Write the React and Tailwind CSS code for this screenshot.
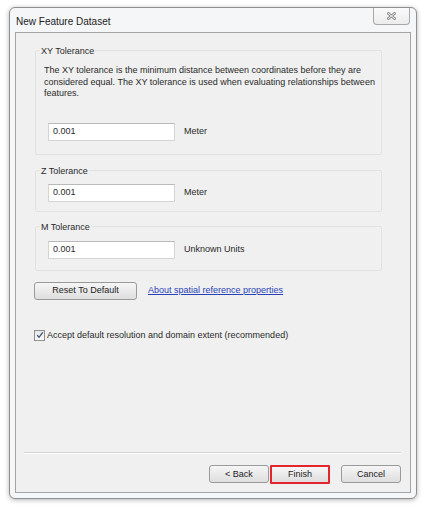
export default function App() {
  const font = { fontFamily: '"Liberation Sans", Arial, sans-serif' }

  const btn =
    "h-[18px] w-[60px] rounded-[3px] border border-[#9a9a9a] bg-gradient-to-b from-[#f6f6f6] to-[#dedede] text-[9px] text-[#222] leading-none flex items-center justify-center"

  return (
    <div className="min-h-[510px] w-[426px] bg-white pt-[7px] pl-[9px]" style={font}>
      {/* Window */}
      <div className="w-[408px] h-[492px] rounded-[6px] border border-[#8f8f8f] bg-[#f5f6f8] shadow-[0_1px_5px_rgba(0,0,0,0.3)] flex flex-col">
        {/* Title bar */}
        <div className="h-[24px] flex items-start justify-between">
          <span className="pl-[6px] pt-[8px] text-[10px] leading-[11px] text-[#1c1c1c]">New Feature Dataset</span>
          <div className="mr-[6px] w-[37px] h-[17px] rounded-b-[4px] border border-t-0 border-[#a8a8a8] bg-gradient-to-b from-[#fafafa] to-[#ececec] flex items-center justify-center">
            <svg width="9" height="8" viewBox="0 0 9 8">
              <path d="M1.5 1.5 L7.5 6.5 M7.5 1.5 L1.5 6.5" stroke="#8a8a8a" strokeWidth="2.6" strokeLinecap="square" />
              <path d="M1.5 1.5 L7.5 6.5 M7.5 1.5 L1.5 6.5" stroke="#f4f4f4" strokeWidth="1" strokeLinecap="square" />
            </svg>
          </div>
        </div>

        {/* Client area */}
        <div className="mx-[5px] mb-[5px] flex-1 border border-[#a4a4a4] bg-[#f0f0f0] flex flex-col text-[9px] text-[#2a2a2a]">
          {/* XY Tolerance */}
          <div className="ml-[19px] mt-[17px] w-[347px] border border-[#e2e2e2] rounded-[2px] pb-[13px]">
            <div className="-mt-[5px] ml-[4px] w-fit px-[1px] bg-[#f0f0f0] leading-[11px]">XY Tolerance</div>
            <p className="mt-[8px] pl-[8px] w-[343px] leading-[11.5px]">
              The XY tolerance is the minimum distance between coordinates before they are considered equal. The XY
              tolerance is used when evaluating relationships between features.
            </p>
            <div className="mt-[23px] ml-[12px] flex items-center gap-[9px]">
              <div className="w-[127px] h-[18px] bg-white border border-[#d4d4d4] border-t-[#b9b9b9] pl-[4px] flex items-center">0.001</div>
              <span>Meter</span>
            </div>
          </div>

          {/* Z Tolerance */}
          <div className="ml-[19px] mt-[15px] w-[347px] border border-[#e2e2e2] rounded-[2px] pb-[9px]">
            <div className="-mt-[5px] ml-[4px] w-fit px-[1px] bg-[#f0f0f0] leading-[11px]">Z Tolerance</div>
            <div className="mt-[7px] ml-[12px] flex items-center gap-[9px]">
              <div className="w-[127px] h-[18px] bg-white border border-[#d4d4d4] border-t-[#b9b9b9] pl-[4px] flex items-center">0.001</div>
              <span>Meter</span>
            </div>
          </div>

          {/* M Tolerance */}
          <div className="ml-[19px] mt-[14px] w-[347px] border border-[#e2e2e2] rounded-[2px] pb-[11px]">
            <div className="-mt-[5px] ml-[4px] w-fit px-[1px] bg-[#f0f0f0] leading-[11px]">M Tolerance</div>
            <div className="mt-[8px] ml-[12px] flex items-center gap-[9px]">
              <div className="w-[127px] h-[18px] bg-white border border-[#d4d4d4] border-t-[#b9b9b9] pl-[4px] flex items-center">0.001</div>
              <span>Unknown Units</span>
            </div>
          </div>

          {/* Reset + link */}
          <div className="ml-[18px] mt-[11px] flex items-center gap-[11px]">
            <button className="h-[18px] w-[103px] rounded-[3px] border border-[#9a9a9a] bg-gradient-to-b from-[#f6f6f6] to-[#dedede] text-[9px] text-[#222] leading-none">
              Reset To Default
            </button>
            <a className="text-[#2942b8] underline leading-none">About spatial reference properties</a>
          </div>

          {/* Checkbox */}
          <label className="ml-[18px] mt-[29px] flex items-center gap-[2px]">
            <span className="w-[11px] h-[11px] border border-[#8f9090] bg-gradient-to-b from-[#e6e6e6] to-[#fafafa] flex items-center justify-center">
              <svg width="8" height="8" viewBox="0 0 8 8">
                <path d="M1.2 4.2 L3 6.3 L6.8 1.3" fill="none" stroke="#3b4f79" strokeWidth="1.3" />
              </svg>
            </span>
            <span>Accept default resolution and domain extent (recommended)</span>
          </label>

          {/* Separator */}
          <div className="mt-auto ml-[8px] mr-[9px] h-[2px] border-t border-[#d2d2d2] border-b border-b-white" />

          {/* Buttons */}
          <div className="mt-[11px] mb-[8px] mr-[9px] flex justify-end">
            <button className={btn}>&lt; Back</button>
            <button className="ml-[1px] h-[19px] w-[60px] rounded-[1px] border-2 border-[#e3262e] bg-gradient-to-b from-[#f6f6f6] to-[#dedede] text-[9px] text-[#222] leading-none flex items-center justify-center">
              Finish
            </button>
            <button className={"ml-[11px] " + btn}>Cancel</button>
          </div>
        </div>
      </div>
    </div>
  )
}
